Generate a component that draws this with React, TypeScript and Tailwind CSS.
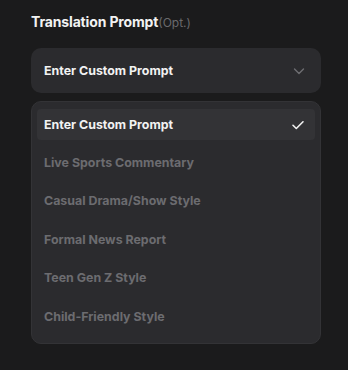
import React from "react";

const items = [
  "Enter Custom Prompt",
  "Live Sports Commentary",
  "Casual Drama/Show Style",
  "Formal News Report",
  "Teen Gen Z Style",
  "Child-Friendly Style",
];

export default function App() {
  return (
    <div
      className="w-[348px] h-[370px] bg-[#1b1b1c] pl-[31px] pr-[27px] pt-[11px]"
      style={{ fontFamily: "Inter, 'Noto Sans', sans-serif" }}
    >
      <div className="flex items-baseline h-[20px]">
        <span className="text-[14px] font-bold text-[#f2f2f2] tracking-[-0.15px]">Translation Prompt</span>
        <span className="text-[12px] text-[#6a6a6d]">(Opt.)</span>
      </div>
      <div className="mt-[17px] h-[45px] rounded-[10px] bg-[#2b2b2e] flex items-center justify-between pl-[13px] pr-[15px]">
        <span className="text-[12.4px] font-bold text-[#f2f2f2] pt-[1px]">Enter Custom Prompt</span>
        <svg width="14" height="14" viewBox="0 0 14 14" fill="none">
          <path d="M2.5 5 L7 9.5 L11.5 5" stroke="#6e6e72" strokeWidth="1.4" strokeLinecap="round" strokeLinejoin="round" />
        </svg>
      </div>
      <div className="mt-[8px] h-[243px] rounded-[10px] bg-[#2b2b2e] border border-[#333336] px-[5px] pt-[7px] flex flex-col gap-[7.4px]">
        {items.map((it, i) => (
          <div
            key={it}
            className={`h-[31px] shrink-0 rounded-[4px] flex items-center justify-between pl-[7px] pr-[10px] ${i === 0 ? "bg-[#333336]" : ""}`}
          >
            <span className={`text-[12.4px] font-bold pt-[1px] ${i === 0 ? "text-[#f2f2f2]" : "text-[#6c6c70]"}`}>{it}</span>
            {i === 0 && (
              <svg width="14" height="14" viewBox="0 0 14 14" fill="none">
                <path d="M2 7.3 L5.3 10.5 L12 3.8" stroke="#f2f2f2" strokeWidth="1.6" strokeLinecap="round" strokeLinejoin="round" />
              </svg>
            )}
          </div>
        ))}
      </div>
    </div>
  );
}
